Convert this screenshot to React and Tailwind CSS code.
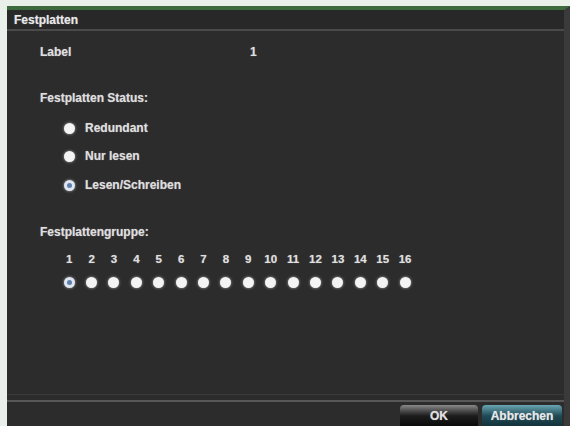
import React from 'react';

const font = { fontFamily: '"Liberation Sans", Arial, sans-serif' };

function Radio({ checked }) {
  return (
    <div
      className={`w-[11px] h-[11px] rounded-full flex items-center justify-center shadow-[0_0_3px_rgba(255,255,255,0.6)] ${
        checked ? 'bg-[#dfe6f0]' : 'bg-[#f4f4f4]'
      }`}
    >
      {checked && <div className="w-[5px] h-[5px] rounded-full bg-[#5d7fae]" />}
    </div>
  );
}

export default function App() {
  const groups = Array.from({ length: 16 }, (_, i) => i + 1);

  return (
    <div
      className="w-[570px] h-[426px] overflow-hidden bg-[#e9efe9] pt-[6px] pl-[7px] flex"
      style={font}
    >
      <div className="flex-1 flex flex-col bg-[#2c2c2c] border-t-[4px] border-[#3d6a3d] border-r-[6px] border-r-[#3a3a3a] text-[#dedede] text-[12px] font-bold [text-shadow:0_0_1px_rgba(255,255,255,0.5)]">
        {/* Title */}
        <div className="h-[19px] flex items-center pl-[7px] bg-[#282828] text-[12px] text-[#e8e8e8]">
          Festplatten
        </div>
        <div className="h-[2px] bg-[#4a4a4a]" />

        <div className="flex flex-col pl-[33px]">
          <div className="mt-[11px] h-[20px] flex items-center">
            <span className="w-[210px]">Label</span>
            <span>1</span>
          </div>

          <div className="mt-[26px] h-[20px] flex items-center">Festplatten Status:</div>

          <div className="mt-[10px] h-[20px] flex items-center pl-[24px] gap-[10px]">
            <Radio />
            <span>Redundant</span>
          </div>
          <div className="mt-[8px] h-[20px] flex items-center pl-[24px] gap-[10px]">
            <Radio />
            <span>Nur lesen</span>
          </div>
          <div className="mt-[9px] h-[20px] flex items-center pl-[24px] gap-[10px]">
            <Radio checked />
            <span>Lesen/Schreiben</span>
          </div>

          <div className="mt-[27px] h-[20px] flex items-center">Festplattengruppe:</div>

          <div className="mt-[8px] ml-[18px] grid grid-cols-[repeat(16,22.4px)] h-[20px] items-center text-[11.5px]">
            {groups.map((g) => (
              <span key={g} className="text-center">
                {g}
              </span>
            ))}
          </div>
          <div className="mt-[2px] ml-[18px] grid grid-cols-[repeat(16,22.4px)] h-[20px] items-center justify-items-center">
            {groups.map((g) => (
              <Radio key={g} checked={g === 1} />
            ))}
          </div>
        </div>

        {/* Footer */}
        <div className="mt-auto">
          <div className="h-[1px] bg-[#3a3a3a]" />
          <div className="h-[5px]" />
          <div className="h-[2px] bg-[#585858]" />
          <div className="h-[24px] flex justify-end items-start pt-[3px] pr-[2px] gap-[4px] text-[12px]">
            <div className="w-[78px] h-[22px] rounded-t-[4px] bg-gradient-to-b from-[#8a8a8a] via-[#1c1c1c] to-[#0a0a0a] flex items-center justify-center text-[#e0e0e0]">
              OK
            </div>
            <div className="w-[80px] h-[22px] rounded-t-[4px] bg-gradient-to-b from-[#6aa7b4] via-[#1f4a56] to-[#123038] flex items-center justify-center text-[#e8e8e8]">
              Abbrechen
            </div>
          </div>
        </div>
      </div>
    </div>
  );
}
